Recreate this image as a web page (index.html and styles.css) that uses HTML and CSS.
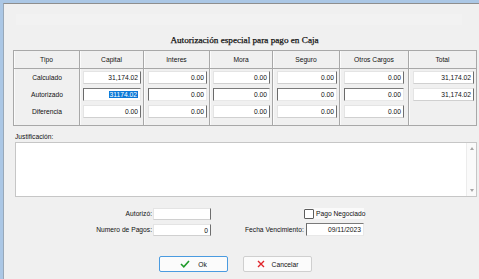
FILE: index.html
```html
<!DOCTYPE html>
<html lang="es">
<head>
    <meta charset="UTF-8">
    <title>Autorización especial para pago en Caja</title>
    <link rel="stylesheet" href="styles.css">
</head>
<body>
    <div class="frame">
        <div class="dialog">
            <div class="band"></div>
            <h1 class="title">Autorización especial para pago en Caja</h1>

            <!-- Tabla de montos -->
            <div class="grid">
                <div class="col c-tipo">
                    <div class="hd">Tipo</div>
                    <div class="bd">
                        <div class="lbl">Calculado</div>
                        <div class="lbl">Autorizado</div>
                        <div class="lbl">Diferencia</div>
                    </div>
                </div>
                <div class="col c-capital">
                    <div class="hd">Capital</div>
                    <div class="bd">
                        <div class="fld ro">31,174.02</div>
                        <div class="fld ed"><span class="sel">31174.02</span></div>
                        <div class="fld ro">0.00</div>
                    </div>
                </div>
                <div class="col c-interes">
                    <div class="hd">Interes</div>
                    <div class="bd">
                        <div class="fld ro">0.00</div>
                        <div class="fld ed">0.00</div>
                        <div class="fld ro">0.00</div>
                    </div>
                </div>
                <div class="col c-mora">
                    <div class="hd">Mora</div>
                    <div class="bd">
                        <div class="fld ro">0.00</div>
                        <div class="fld ed">0.00</div>
                        <div class="fld ro">0.00</div>
                    </div>
                </div>
                <div class="col c-seguro">
                    <div class="hd">Seguro</div>
                    <div class="bd">
                        <div class="fld ro">0.00</div>
                        <div class="fld ed">0.00</div>
                        <div class="fld ro">0.00</div>
                    </div>
                </div>
                <div class="col c-otros">
                    <div class="hd">Otros Cargos</div>
                    <div class="bd">
                        <div class="fld ro">0.00</div>
                        <div class="fld ed">0.00</div>
                        <div class="fld ro">0.00</div>
                    </div>
                </div>
                <div class="col c-total">
                    <div class="hd">Total</div>
                    <div class="bd">
                        <div class="fld ro">31,174.02</div>
                        <div class="fld ro">31,174.02</div>
                    </div>
                </div>
            </div>

            <!-- Justificacion -->
            <div class="just-label">Justificación:</div>
            <div class="memo">
                <div class="memo-text"></div>
                <div class="memo-bar">
                    <span class="arr up"></span>
                    <span class="arr dn"></span>
                </div>
            </div>

            <!-- Datos extra -->
            <div class="extra">
                <div class="elbl">Autorizó:</div>
                <div class="fld ro short"></div>
                <div></div>
                <div></div>
                <label class="check"><span class="box"></span>Pago Negociado</label>

                <div class="elbl">Numero de Pagos:</div>
                <div class="fld ro short">0</div>
                <div></div>
                <div class="elbl left">Fecha Vencimiento:</div>
                <div class="fld ed">09/11/2023</div>
            </div>

            <!-- Botones -->
            <div class="buttons">
                <button class="btn focus">
                    <svg width="10" height="8" viewBox="0 0 10 8"><polyline points="1,4 3.8,6.8 9,1" fill="none" stroke="#1f9a2a" stroke-width="1.6"/></svg>
                    Ok
                </button>
                <button class="btn">
                    <svg width="8" height="8" viewBox="0 0 8 8"><path d="M1 1 L7 7 M7 1 L1 7" stroke="#e0242a" stroke-width="1.4"/></svg>
                    Cancelar
                </button>
            </div>
        </div>
    </div>
</body>
</html>
```

FILE: styles.css
```css
body {
    margin: 0;
    background: #f0f0f0;
    font-family: "Liberation Sans", Arial, sans-serif;
    font-size: 6.7px;
    color: #111;
}

.frame {
    height: 279px;
    box-sizing: border-box;
    border-top: 3px solid #abc7e5;
    border-left: 3px solid #abc7e5;
}

.dialog {
    height: 100%;
    box-sizing: border-box;
    border-top: 1px solid #8e8e8e;
    border-left: 1px solid #98a8b8;
    background: #f0f0f0;
}

.band {
    margin: 10px 0 0 12px;
    width: 446px;
    height: 11px;
    background: #f2f2f2;
}

.title {
    margin: 10px 0 4px 0;
    font-family: "Liberation Serif", "Times New Roman", serif;
    font-size: 9.2px;
    font-weight: normal;
    line-height: 11px;
    text-align: center;
    padding-left: 6px;
    color: #111;
    -webkit-text-stroke: 0.25px #111;
}

/* tabla */
.grid {
    display: flex;
    margin-left: 9px;
    width: 464px;
    box-sizing: border-box;
    border: 1px solid #a8a8a8;
    border-left: none;
}

.col {
    box-sizing: border-box;
    border-left: 1px solid #a8a8a8;
    box-shadow: inset 1px 0 0 #fbfbfb;
}

.c-tipo { width: 66px; }
.c-capital { width: 64px; }
.c-interes { width: 66px; }
.c-mora { width: 63px; }
.c-seguro { width: 67px; }
.c-otros { width: 69px; }
.c-total { width: 68px; }

.hd {
    height: 17px;
    line-height: 17px;
    border-bottom: 1px solid #a8a8a8;
    text-align: center;
}

.bd {
    display: flex;
    flex-direction: column;
    gap: 4px;
    padding: 2px 2px 7px 3px;
}

.c-interes .bd,
.c-seguro .bd,
.c-total .bd {
    padding-left: 4px;
}

.c-otros .bd {
    padding: 2px 4px 7px 4px;
}

.lbl {
    height: 13px;
    line-height: 13px;
    text-align: center;
}

.fld {
    height: 13px;
    box-sizing: border-box;
    background: #fff;
    text-align: right;
    padding-right: 2px;
    line-height: 11px;
    white-space: nowrap;
}

.fld.ro {
    border: 1px solid #e4e4e4;
    border-right: 1px solid #6e6e6e;
    border-bottom-color: #d0d0d0;
}

.fld.ed {
    border: 1px solid #e8e8e8;
    border-left: 1px solid #6a6a6a;
    border-top: 1px solid #7a7a7a;
}

.sel {
    background: #0a78d7;
    color: #fff;
    padding: 0 1px;
}

/* justificacion */
.just-label {
    margin: 6px 0 0 11px;
    line-height: 9px;
}

.memo {
    display: flex;
    margin: 1px 0 0 11px;
    width: 462px;
    height: 55px;
    box-sizing: border-box;
    border: 1px solid #c6c6c6;
    background: #fff;
}

.memo-text {
    flex: 1;
}

.memo-bar {
    width: 9px;
    display: flex;
    flex-direction: column;
    justify-content: space-between;
    align-items: center;
    padding: 4px 0;
    border-left: 1px solid #ececec;
    background: #fafafa;
}

.arr {
    width: 0;
    height: 0;
    border-left: 2.5px solid transparent;
    border-right: 2.5px solid transparent;
}

.arr.up {
    border-bottom: 3px solid #a6a6a6;
}

.arr.dn {
    border-top: 3px solid #a6a6a6;
}

/* datos extra */
.extra {
    display: grid;
    grid-template-columns: 61px 58px 34px 61px 58px;
    grid-auto-rows: 13px;
    row-gap: 3px;
    align-items: center;
    margin: 10px 0 0 88px;
}

.elbl {
    text-align: right;
    padding-right: 1px;
    white-space: nowrap;
}

.elbl.left {
    text-align: left;
}

.fld.short {
    height: 12px;
}

.check {
    display: flex;
    align-items: center;
    gap: 2px;
    margin-left: -2px;
    height: 11px;
    width: 60px;
    white-space: nowrap;
    background: #fafafa;
}

.check .box {
    flex: none;
    width: 8px;
    height: 8px;
    border: 1px solid #5c5c5c;
    border-radius: 1px;
    background: #fff;
}

/* botones */
.buttons {
    display: flex;
    gap: 15px;
    margin: 20px 0 0 155px;
}

.btn {
    width: 69px;
    height: 16px;
    display: flex;
    align-items: center;
    justify-content: center;
    gap: 7px;
    padding: 0;
    border: 1px solid #cfcfcf;
    border-radius: 2px;
    background: #fbfbfb;
    font-family: inherit;
    font-size: 6.7px;
    color: #111;
}

.btn.focus {
    border-color: #4a9be0;
    gap: 8px;
}
```
